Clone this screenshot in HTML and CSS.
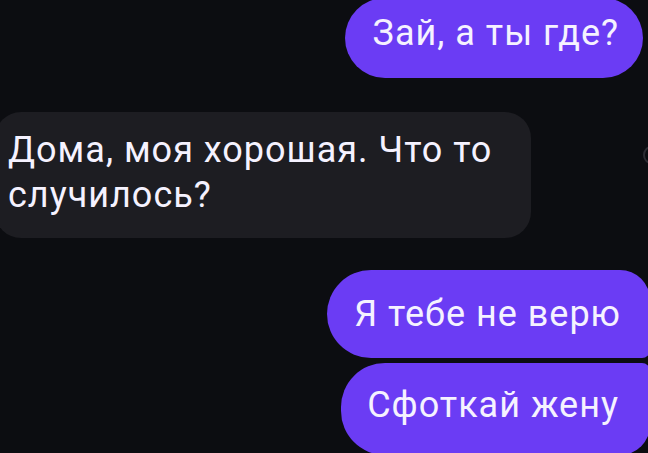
FILE: index.html
```html
<!DOCTYPE html>
<html lang="ru">
<head>
    <meta charset="UTF-8">
    <meta name="viewport" content="width=device-width, initial-scale=1.0">
    <title>Чат</title>
    <link rel="stylesheet" href="styles.css">
</head>
<body>

    <div class="chat">
        <div class="msg out first">Зай, а ты где?</div>

        <div class="row">
            <div class="msg in">Дома, моя хорошая. Что то случилось?</div>
            <span class="reaction"></span>
        </div>

        <div class="group">
            <div class="msg out top">Я тебе не верю</div>
            <div class="msg out bottom">Сфоткай жену</div>
        </div>
    </div>

</body>
</html>
```

FILE: styles.css
```css
* {
    margin: 0;
    padding: 0;
    box-sizing: border-box;
}
html, body {
    width: 648px;
    height: 453px;
    overflow: hidden;
}
body {
    font-family: Roboto, "Liberation Sans", sans-serif;
    background-color: #0c0d11;
    color: #f5f2ff;
}
.chat {
    display: flex;
    flex-direction: column;
    align-items: flex-end;
}
.msg {
    font-size: 36px;
    letter-spacing: 1px;
    line-height: 45px;
    white-space: nowrap;
}
.out {
    background-color: #6b3cf4;
    border-radius: 40px;
}
.first {
    margin-top: -2px;
    margin-right: 5px;
    height: 80px;
    padding: 13px 24px 0 28px;
}
.row {
    align-self: stretch;
    display: flex;
    justify-content: space-between;
    align-items: flex-start;
    margin-top: 34px;
}
.in {
    white-space: normal;
    width: 536px;
    margin-left: -5px;
    height: 126px;
    padding: 16px 20px 0 13px;
    background-color: #1d1d22;
    border-radius: 26px;
}
.reaction {
    width: 16px;
    height: 18px;
    margin-top: 34px;
    margin-right: -11px;
    border: 2px solid #2c2c33;
    border-radius: 50%;
}
.group {
    margin-top: 32px;
    display: flex;
    flex-direction: column;
    align-items: flex-end;
    gap: 5px;
    margin-right: -2px;
}
.top {
    height: 88px;
    padding: 22px 29px 0 27px;
    border-radius: 44px 30px 8px 44px;
}
.bottom {
    height: 92px;
    padding: 20px 31px 0 26px;
    border-radius: 44px 8px 30px 44px;
}
```
